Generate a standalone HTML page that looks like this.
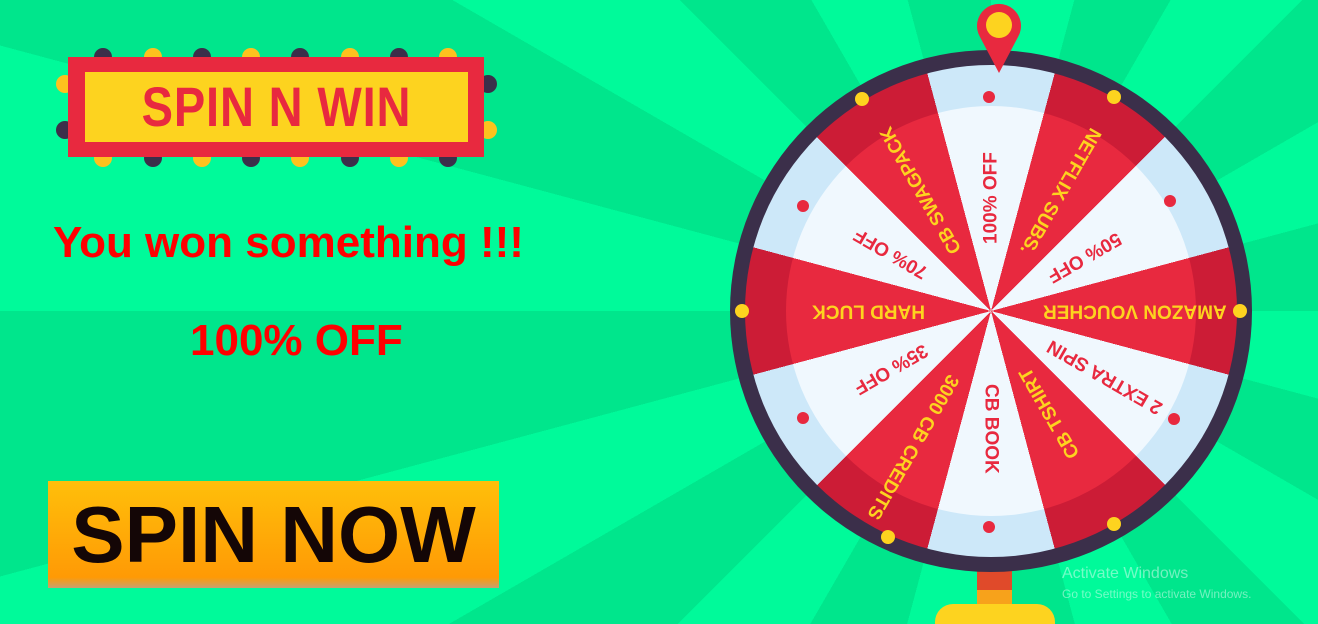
<!DOCTYPE html>
<html><head><meta charset="utf-8"><style>
html,body{margin:0;padding:0;width:1318px;height:624px;overflow:hidden}
body{position:relative;font-family:"Liberation Sans",sans-serif;
background:repeating-conic-gradient(from 0deg at 991px 311px,#00fa9a 0deg 15deg,#00e68c 15deg 30deg);}
.abs{position:absolute}
.dot{position:absolute;width:18px;height:18px;border-radius:50%}
.d{background:#3b2f4a}.y{background:#fdc21e}
#banner{left:68px;top:57px;width:416px;height:100px;background:#e8293f}
#inner{left:85px;top:72px;width:383px;height:70px;background:#fdd31f}
#title{left:85px;top:72px;width:383px;height:70px;line-height:70px;text-align:center;color:#e8293f;font-weight:bold;font-size:56px;transform:scaleX(.84);letter-spacing:1px}
.msg{color:#ff0000;font-weight:bold;font-size:44px;white-space:nowrap}
#btn{left:48px;top:481px;width:451px;height:107px;background:linear-gradient(#ffbf0a,#ff9a05 90%,#c7a070 100%)}
#btntxt{left:48px;top:481px;width:451px;height:107px;line-height:107px;text-align:center;font-weight:bold;font-size:80px;color:#140606}
#outer{left:745px;top:65px;width:492px;height:492px;border-radius:50%;
background:repeating-conic-gradient(from -15deg,#cde8f9 0deg 30deg,#cc1c36 30deg 60deg)}
#disk{left:786px;top:106px;width:410px;height:410px;border-radius:50%;
background:repeating-conic-gradient(from -15deg,#f0f8fe 0deg 30deg,#e8293f 30deg 60deg)}
</style></head><body>
<div class="dot d" style="left:94px;top:48px"></div><div class="dot y" style="left:144px;top:48px"></div>
<div class="dot d" style="left:193px;top:48px"></div><div class="dot y" style="left:242px;top:48px"></div>
<div class="dot d" style="left:291px;top:48px"></div><div class="dot y" style="left:341px;top:48px"></div>
<div class="dot d" style="left:390px;top:48px"></div><div class="dot y" style="left:439px;top:48px"></div>
<div class="dot y" style="left:94px;top:149px"></div><div class="dot d" style="left:144px;top:149px"></div>
<div class="dot y" style="left:193px;top:149px"></div><div class="dot d" style="left:242px;top:149px"></div>
<div class="dot y" style="left:291px;top:149px"></div><div class="dot d" style="left:341px;top:149px"></div>
<div class="dot y" style="left:390px;top:149px"></div><div class="dot d" style="left:439px;top:149px"></div>
<div class="dot y" style="left:56px;top:75px"></div><div class="dot d" style="left:56px;top:121px"></div>
<div class="dot d" style="left:479px;top:75px"></div><div class="dot y" style="left:479px;top:121px"></div>
<div id="banner" class="abs"></div>
<div id="inner" class="abs"></div>
<div id="title" class="abs">SPIN N WIN</div>

<div class="abs msg" style="left:53px;top:218px">You won something !!!</div>
<div class="abs msg" style="left:190px;top:316px">100% OFF</div>

<div id="btn" class="abs"></div>
<div id="btntxt" class="abs">SPIN NOW</div>

<div class="abs" style="left:977px;top:570px;width:35px;height:20px;background:#e04a2a"></div>
<div class="abs" style="left:977px;top:590px;width:35px;height:16px;background:#f7a21b"></div>
<div class="abs" style="left:935px;top:604px;width:120px;height:20px;background:#fdd31f;border-radius:18px 18px 0 0"></div>

<div class="abs" style="left:730px;top:50px;width:522px;height:522px;border-radius:50%;background:#3b2f4a"></div>
<div id="outer" class="abs"></div>
<div id="disk" class="abs"></div>

<svg class="abs" style="left:0;top:0" width="1318" height="624" viewBox="0 0 1318 624">
<g fill="#fdd31f">
<circle cx="1240" cy="311" r="7"/><circle cx="1114" cy="524" r="7"/><circle cx="888" cy="537" r="7"/>
<circle cx="742" cy="311" r="7"/><circle cx="862" cy="99" r="7"/><circle cx="1114" cy="97" r="7"/>
</g>
<g fill="#e8293f">
<circle cx="989" cy="97" r="6"/><circle cx="1170" cy="201" r="6"/><circle cx="1174" cy="419" r="6"/>
<circle cx="989" cy="527" r="6"/><circle cx="803" cy="418" r="6"/><circle cx="803" cy="206" r="6"/>
</g>
<g transform="translate(991,311)" font-family="Liberation Sans, sans-serif" font-weight="bold" font-size="19" dominant-baseline="central">
<text transform="rotate(-90)" x="67" fill="#e8293f">100% OFF</text>
<text transform="rotate(120)" x="-67" text-anchor="end" fill="#fdd31f">NETFLIX SUBS.</text>
<text transform="rotate(150)" x="-67" text-anchor="end" fill="#e8293f">50% OFF</text>
<text transform="rotate(180)" x="-52" text-anchor="end" fill="#fdd31f">AMAZON VOUCHER</text>
<text transform="rotate(210)" x="-67" text-anchor="end" fill="#e8293f">2 EXTRA SPIN</text>
<text transform="rotate(240)" x="-67" text-anchor="end" fill="#fdd31f">CB TSHIRT</text>
<text transform="rotate(90)" x="73" fill="#e8293f">CB BOOK</text>
<text transform="rotate(120)" x="75" fill="#fdd31f">3000 CB CREDITS</text>
<text transform="rotate(150)" x="75" fill="#e8293f">35% OFF</text>
<text transform="rotate(180)" x="66" fill="#fdd31f">HARD LUCK</text>
<text transform="rotate(210)" x="75" fill="#e8293f">70% OFF</text>
<text transform="rotate(240)" x="68" fill="#fdd31f">CB SWAGPACK</text>
</g>
<path d="M999,73 L980,37 A22,22 0 1 1 1018,37 Z" fill="#e8293f"/>
<circle cx="999" cy="25" r="13" fill="#fdd31f"/>
<text x="1062" y="578" font-family="Liberation Sans, sans-serif" font-size="16" fill="#ffffff" fill-opacity="0.45">Activate Windows</text>
<text x="1062" y="598" font-family="Liberation Sans, sans-serif" font-size="12" fill="#ffffff" fill-opacity="0.45">Go to Settings to activate Windows.</text>
</svg>
</body></html>
